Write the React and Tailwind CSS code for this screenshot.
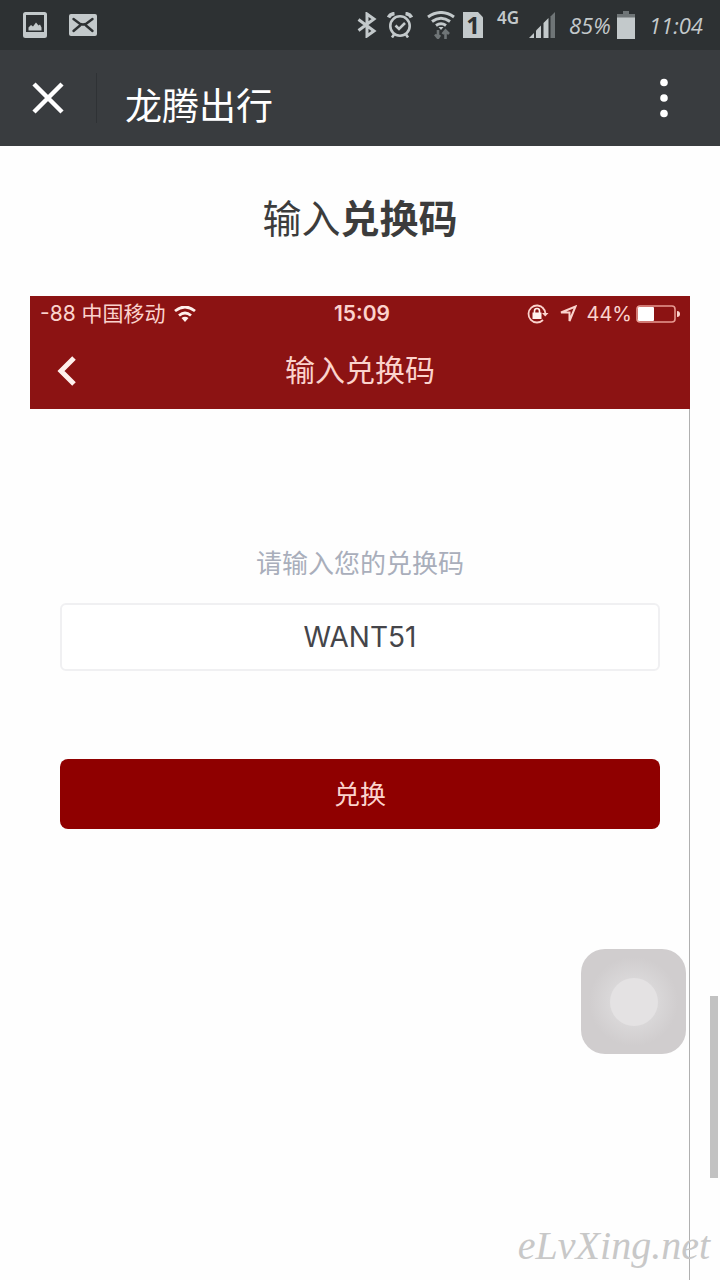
import React, { useState } from 'react';

// Android status bar, left side
function GalleryIcon() {
  return (
    <svg className="h-[26px] w-6" viewBox="0 0 24 26" fill="none">
      <rect x="1.5" y="1.5" width="21" height="23" rx="1" stroke="#c3c9cb" strokeWidth="3" />
      <path d="M2 22.5h20" stroke="#c3c9cb" strokeWidth="5" />
      <path d="M5.5 18.500v-3l2.500-2.500 2 1.500 3-4 2.500 3 1.500-1 1.500 3v3z" fill="#c3c9cb" />
    </svg>
  );
}

function MailIcon() {
  return (
    <svg className="h-[22px] w-7" viewBox="0 0 28 22" fill="none" stroke="#2d3133" strokeWidth="2.4" strokeLinecap="round">
      <rect width="28" height="22" rx="2" fill="#c3c9cb" stroke="none" />
      <path d="M4.5 5l6 4.500q3.500 2 7 0l6-4.500M4.500 17l6.500-5.500M23.500 17L17 11.500" />
    </svg>
  );
}

// Android status bar, right side
function BluetoothIcon() {
  return (
    <svg className="h-[26px] w-5" viewBox="0 0 20 26" fill="none">
      <path d="M1.500 7.500L17 19L10 24V2L17 7L1.500 18.500" stroke="#c3c9cb" strokeWidth="3" />
    </svg>
  );
}

function AlarmIcon() {
  return (
    <svg className="h-[26px] w-[26px]" viewBox="0 0 26 26" fill="none" stroke="#c3c9cb">
      <circle cx="13" cy="14" r="9.700" strokeWidth="2.600" />
      <path d="M8.500 13.500l3.500 3.500 6-6" strokeWidth="2.600" />
      <path d="M1.500 5.500Q3 2 7.500 1.500M24.500 5.500Q23 2 18.500 1.500" strokeWidth="3.500" />
      <path d="M7 22.500l-2 3M19 22.500l2 3" strokeWidth="2.600" />
    </svg>
  );
}

function WifiDataIcon() {
  return (
    <svg className="h-7 w-7" viewBox="0 0 28 28" fill="none">
      <path d="M1 6Q14-3 27 6M5 10.500Q14 4 23 10.500M9 14.500Q14 11 19 14.500" stroke="#c3c9cb" strokeWidth="3" />
      <path d="M11.500 16h5L14 19z" fill="#c3c9cb" />
      <path d="M11 19v8M8 23.500l3 3.500 2-3M18.500 28v-8M15.500 23l3-3.500 3.500 3.500" stroke="#6f7577" strokeWidth="2.600" />
    </svg>
  );
}

function SignalIcon() {
  return (
    <svg className="h-[26px] w-[26px]" viewBox="0 0 26 26" fill="#c3c9cb">
      <path d="M0 26l5-5v5z" />
      <path d="M7 18.500l5-5V26H7z" />
      <path d="M14.500 11l5-5v20h-5z" />
      <path d="M21.500 4.500L26 0v26h-4.500z" fill="#6f7577" />
    </svg>
  );
}

function BatteryIcon() {
  return (
    <svg className="h-7 w-[18px]" viewBox="0 0 18 28">
      <path d="M6 0h6v3h6v4H0V3h6z" fill="#6f7577" />
      <rect y="6.500" width="18" height="21.500" fill="#c3c9cb" />
    </svg>
  );
}

function AndroidStatusBar() {
  return (
    <div className="flex h-[50px] items-center bg-[#2d3133] pr-5 pl-[23px] text-[#c3c9cb]">
      <GalleryIcon />
      <div className="ml-[22px]"><MailIcon /></div>
      <div className="ml-auto flex items-center">
        <BluetoothIcon />
        <div className="ml-2.5"><AlarmIcon /></div>
        <div className="ml-3.5"><WifiDataIcon /></div>
        <span className="ml-2 flex h-[26px] w-5 items-center justify-center bg-[#c3c9cb] font-['Noto_Sans',sans-serif] text-2xl font-bold text-[#2d3133] [clip-path:polygon(0_0,75%_0,100%_20%,100%_100%,0_100%)]">1</span>
        <span className="ml-3.5 w-[22px] pb-3.5 font-['Noto_Sans',sans-serif] text-[17px] leading-5 font-semibold">4G</span>
        <div className="ml-2.5"><SignalIcon /></div>
        <span className="ml-3.5 w-[42px] font-['Open_Sans',sans-serif] text-[22px] whitespace-nowrap italic">85%</span>
        <div className="ml-1.5"><BatteryIcon /></div>
        <span className="ml-3.5 w-[51px] font-['Open_Sans',sans-serif] text-[22px] whitespace-nowrap italic">11:04</span>
      </div>
    </div>
  );
}

function AppHeader() {
  return (
    <header className="flex h-24 items-center bg-[#393c3f] pr-[50px] pl-8 text-white">
      <button type="button" aria-label="关闭">
        <svg className="size-8" viewBox="0 0 32 32" fill="none">
          <path d="M2 2l28 28M30 2L2 30" stroke="#fff" strokeWidth="4.500" />
        </svg>
      </button>
      <div className="ml-8 h-[50px] w-px bg-[#2f3235]" />
      <h1 className="ml-7 pt-3 font-['Noto_Sans_CJK_SC',sans-serif] text-[37px] leading-10">龙腾出行</h1>
      <button type="button" aria-label="更多" className="ml-auto">
        <svg className="h-10 w-3" viewBox="0 0 12 40" fill="#fff">
          <circle cx="6" cy="4.500" r="3.800" />
          <circle cx="6" cy="20" r="3.800" />
          <circle cx="6" cy="35.500" r="3.800" />
        </svg>
      </button>
    </header>
  );
}

// Status bar of the embedded phone screen
function PhoneStatusBar() {
  return (
    <div className="grid h-9 grid-cols-3 items-center px-2.5 font-['Inter','Noto_Sans_CJK_SC',sans-serif] text-[21px] text-[#fbd3cd]">
      <div className="flex items-center gap-2 whitespace-nowrap">
        <span>-88 中国移动</span>
        <svg className="h-4 w-[22px]" viewBox="0 0 22 16" fill="none" stroke="#fff0ec">
          <path d="M1 5Q11-3 21 5M5 9.500Q11 4.500 17 9.500" strokeWidth="2.800" />
          <path d="M7.500 12Q11 9.500 14.500 12L11 16z" fill="#fff0ec" stroke="none" />
        </svg>
      </div>
      <span className="pl-1 text-center font-semibold">15:09</span>
      <div className="flex items-center justify-end">
        <svg className="h-5 w-[22px]" viewBox="0 0 22 20" fill="none">
          <path d="M16.500 4.500A8.500 8.500 0 1 0 16 16M15.500 3.500Q18 6 18.300 9" stroke="#fbd3cd" strokeWidth="1.800" />
          <path d="M15 9h6.500l-3.300 3.500z" fill="#fbd3cd" />
          <rect x="5.500" y="8.500" width="9" height="6.500" fill="#fff0ec" />
          <path d="M7.500 9V7a2.500 2.500 0 0 1 5 0V9" stroke="#fff0ec" strokeWidth="1.600" />
        </svg>
        <svg className="ml-2.5 size-[18px]" viewBox="0 0 18 18" fill="none">
          <path d="M2 7.500L16.500 1.500L10.500 16V7.500z" stroke="#fbd3cd" strokeWidth="2" />
        </svg>
        <span className="ml-2.5 text-xl">44%</span>
        <svg className="ml-1 h-[18px] w-[44px]" viewBox="0 0 44 18" fill="none">
          <rect x="1" y="1" width="38" height="16" rx="3" stroke="#e79a92" strokeWidth="1.600" />
          <rect x="2" y="2" width="16" height="14" rx="1" fill="#fff" />
          <path d="M41 6q3 0 3 3t-3 3z" fill="#fbd3cd" />
        </svg>
      </div>
    </div>
  );
}

function RedeemForm() {
  const [code, setCode] = useState('WANT51');

  return (
    <form className="flex flex-col pt-[134px] pr-[29px] pl-[30px]" onSubmit={(e) => e.preventDefault()}>
      <label htmlFor="code" className="text-center text-[26px] leading-[38px] text-[#a9aebb]">请输入您的兑换码</label>
      <input
        id="code"
        type="text"
        value={code}
        onChange={(e) => setCode(e.target.value)}
        className="mt-[22px] h-[68px] w-full rounded-md border-2 border-[#f0f0f2] bg-white text-center font-['Inter',sans-serif] text-[28px] text-[#45454a] outline-none"
      />
      <button type="submit" className="mt-[88px] h-[70px] rounded-lg bg-[#8f0000] pb-1 text-[26px] text-[#fbd3cd]">兑换</button>
    </form>
  );
}

function App() {
  return (
    <div className="relative flex min-h-screen flex-col bg-[#fefefe] font-['Noto_Sans_CJK_SC',sans-serif]">
      <AndroidStatusBar />
      <AppHeader />

      <main className="flex grow flex-col px-[30px]">
        <h2 className="pt-10 pb-[50px] text-center text-[39px] leading-[60px] text-[#3c3c3c]">
          输入<strong className="font-bold">兑换码</strong>
        </h2>

        <section className="relative flex grow flex-col">
          <div className="bg-[#8c1313]">
            <PhoneStatusBar />
            <div className="grid h-[77px] grid-cols-[1fr_auto_1fr] items-center px-[27px]">
              <button type="button" aria-label="返回" className="justify-self-start">
                <svg className="h-[30px] w-5" viewBox="0 0 20 30" fill="none">
                  <path d="M17 2L4 15l13 13" stroke="#fff0ec" strokeWidth="5" />
                </svg>
              </button>
              <h3 className="pb-1.5 text-3xl text-[#fbd3cd]">输入兑换码</h3>
            </div>
          </div>
          <div className="grow border-r border-[#b0b0b0]">
            <RedeemForm />
          </div>

          {/* Floating assistive button */}
          <button type="button" aria-label="辅助触控" className="absolute top-[653px] right-1 flex size-[105px] items-center justify-center rounded-3xl bg-[radial-gradient(circle,#dad8d9_30%,#d0cdce_60%)]">
            <span className="size-12 rounded-full bg-[#e4e2e3]" />
          </button>
        </section>
      </main>

      {/* Scroll thumb */}
      <div className="absolute right-0.5 bottom-[102px] h-[182px] w-2 bg-[#c2c2c2]" />
      <span className="absolute right-2.5 bottom-2.5 font-['Liberation_Serif',serif] text-[40px] leading-[48px] text-[#c8c8c8] italic">eLvXing.net</span>
    </div>
  );
}

export default App;
